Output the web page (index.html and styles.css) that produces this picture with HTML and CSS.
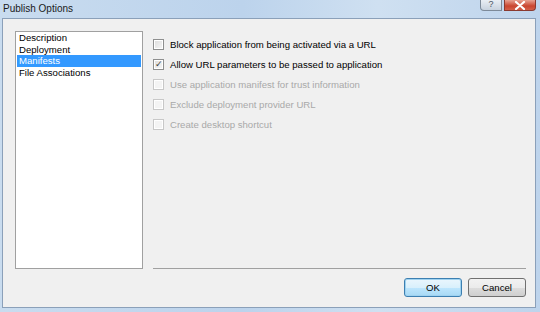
FILE: index.html
```html
<!DOCTYPE html>
<html lang="en">
<head>
  <meta charset="UTF-8" />
  <title>Publish Options</title>
  <link rel="stylesheet" href="styles.css">
</head>
<body>
  <div class="window">
    <div class="titlebar">
      <span class="title">Publish Options</span>
      <div class="caption-btns">
        <div class="help-btn">?</div>
        <div class="close-btn">
          <svg width="12" height="9" viewBox="0 0 12 9">
            <path d="M2 1 L10 8 M10 1 L2 8" stroke="#fff" stroke-width="2.2" stroke-linecap="round"/>
          </svg>
        </div>
      </div>
    </div>

    <div class="client">
      <div class="main">
        <ul class="list">
          <li>Description</li>
          <li>Deployment</li>
          <li class="selected">Manifests</li>
          <li>File Associations</li>
        </ul>

        <div class="options">
          <label class="option"><span class="box"></span>Block application from being activated via a URL</label>
          <label class="option"><span class="box checked">&#10003;</span>Allow URL parameters to be passed to application</label>
          <label class="option disabled"><span class="box"></span>Use application manifest for trust information</label>
          <label class="option disabled"><span class="box"></span>Exclude deployment provider URL</label>
          <label class="option disabled"><span class="box"></span>Create desktop shortcut</label>
        </div>
      </div>

      <div class="buttons">
        <button class="btn default">OK</button>
        <button class="btn">Cancel</button>
      </div>
    </div>
  </div>
</body>
</html>
```

FILE: styles.css
```css
body {
  margin: 0;
  font-family: "Liberation Sans", Arial, sans-serif;
  font-size: 9.6px;
  color: #000;
}
.window {
  width: 540px;
  height: 312px;
  box-sizing: border-box;
  background: linear-gradient(90deg, #c9dcef 0%, #bcd3ec 45%, #cfe0f1 70%, #bed4ec 100%);
  padding: 0 4px 4px 2px;
  display: flex;
  flex-direction: column;
}
.titlebar {
  height: 18px;
  display: flex;
  justify-content: space-between;
  align-items: flex-start;
}
.title {
  padding: 3px 0 0 1px;
  font-size: 10px;
  color: #1a1a1a;
}
.caption-btns {
  display: flex;
  gap: 2px;
  margin-right: 0;
}
.help-btn {
  width: 20px;
  height: 10px;
  border: 1px solid #7d8a99;
  border-top: none;
  border-radius: 0 0 0 4px;
  background: linear-gradient(#e9eef4, #c8d2de);
  color: #4a5563;
  font-size: 9px;
  line-height: 9px;
  text-align: center;
}
.close-btn {
  width: 30px;
  height: 10px;
  border: 1px solid #8a3a30;
  border-top: none;
  border-radius: 0 0 4px 0;
  background: linear-gradient(#e8a393, #c9452f 60%, #d4604a);
  display: flex;
  justify-content: center;
  align-items: center;
}
.client {
  flex: 1;
  background: #f0f0f0;
  border: 1px solid #8ba0b9;
  padding: 12px 9px 0 12px;
  display: flex;
  flex-direction: column;
}
.main {
  display: flex;
  gap: 10px;
}
.list {
  list-style: none;
  margin: 0;
  padding: 0 1px;
  width: 124px;
  height: 236px;
  background: #fff;
  border: 1px solid #a0a0a0;
}
.list li {
  height: 11.7px;
  line-height: 11.7px;
  padding-left: 2px;
}
.list li.selected {
  background: #3399ff;
  color: #fff;
}
.options {
  flex: 1;
  border-bottom: 1px solid #a0a0a0;
  padding-top: 3px;
}
.option {
  display: flex;
  align-items: center;
  gap: 6px;
  height: 20px;
}
.option.disabled {
  color: #a9a9a9;
}
.box {
  width: 9px;
  height: 9px;
  border: 1px solid #8e8f8f;
  background: linear-gradient(135deg, #dcdcdc, #f7f7f7);
  box-shadow: inset 0 0 0 1px #fff;
  font-size: 9px;
  line-height: 9px;
  text-align: center;
  color: #404040;
}
.option.disabled .box {
  border-color: #c8c8c8;
  background: #f4f4f4;
}
.buttons {
  display: flex;
  justify-content: flex-end;
  gap: 6px;
  margin-top: 9px;
}
.btn {
  width: 58px;
  height: 19px;
  font-family: inherit;
  font-size: 9.6px;
  border: 1px solid #707070;
  border-radius: 3px;
  background: linear-gradient(#f2f2f2 0%, #ebebeb 50%, #dddddd 51%, #cfcfcf 100%);
  padding: 0;
  color: #000;
}
.btn.default {
  border-color: #3c7fb1;
  box-shadow: inset 0 0 0 1px #9fd2f0;
  background: linear-gradient(#eaf6fd 0%, #d9f0fc 50%, #bee6fd 51%, #a7d9f5 100%);
}
```
